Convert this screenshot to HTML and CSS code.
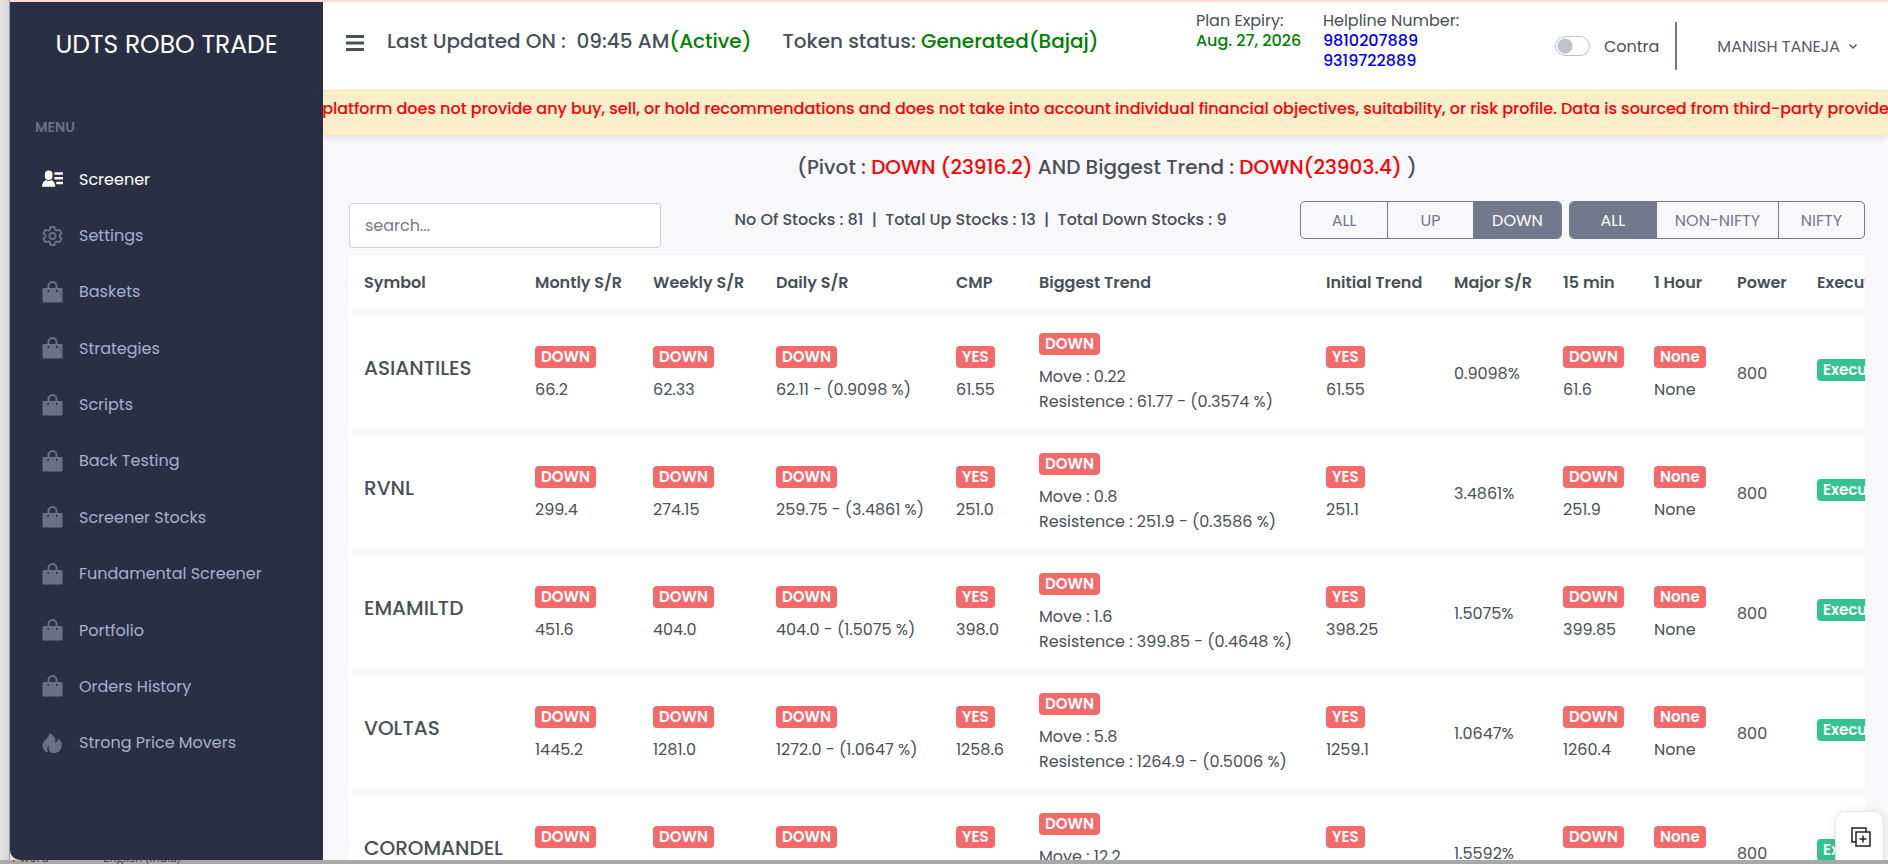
FILE: index.html
```html
<!DOCTYPE html>
<html lang="en">
<head>
    <meta charset="UTF-8">
    <meta name="viewport" content="width=device-width, initial-scale=1.0">
    <title>UDTS Robo Trade</title>
    <link rel="stylesheet" href="styles.css">
</head>
<body>
    <svg class="sprite" aria-hidden="true">
        <symbol id="bag" viewBox="0 0 20 22">
            <path fill-rule="evenodd" d="M5 7V5a5 5 0 0 1 10 0v2h4a1 1 0 0 1 1 1v12.500a1 1 0 0 1-1 1h-18a1 1 0 0 1-1-1v-12.500a1 1 0 0 1 1-1zM7 7h6V5a3 3 0 0 0-6 0zM5 9h1.500v2H5zM13.500 9H15v2h-1.500z"/>
        </symbol>
    </svg>

    <div class="window">
        <aside class="sidebar">
            <h1 class="brand">UDTS ROBO TRADE</h1>
            <p class="menu-title">MENU</p>
            <ul class="menu">
                <li><a class="active" href="#">
                    <svg viewBox="0 0 22 20"><path d="M7 1a4 4 0 0 1 4 4v2a4 4 0 0 1-8 0V5a4 4 0 0 1 4-4zM0 18c0-4 2-6 4-7 2 1.500 4 1.500 6 0 2 1 4 3 4 7zM13 3h9v2.500h-9zM13 8h9v2.500h-9zM15 13h7v2.500h-7z"/></svg>
                    Screener</a></li>
                <li><a href="#">
                    <svg class="line" viewBox="0 0 22 22"><circle cx="11" cy="11" r="3.200"/><path d="M9 1.500h4l.8 2.900 1.800 1 2.900-.8 2 3.500-2.100 2.100v1.600l2.100 2.100-2 3.500-2.900-.8-1.800 1-.8 2.900H9l-.8-2.900-1.800-1-2.900.8-2-3.500 2.100-2.100v-1.600L1.500 8.100l2-3.500 2.900.8 1.800-1z"/></svg>
                    Settings</a></li>
                <li><a href="#"><svg><use href="#bag"/></svg>Baskets</a></li>
                <li><a href="#"><svg><use href="#bag"/></svg>Strategies</a></li>
                <li><a href="#"><svg><use href="#bag"/></svg>Scripts</a></li>
                <li><a href="#"><svg><use href="#bag"/></svg>Back Testing</a></li>
                <li><a href="#"><svg><use href="#bag"/></svg>Screener Stocks</a></li>
                <li><a href="#"><svg><use href="#bag"/></svg>Fundamental Screener</a></li>
                <li><a href="#"><svg><use href="#bag"/></svg>Portfolio</a></li>
                <li><a href="#"><svg><use href="#bag"/></svg>Orders History</a></li>
                <li><a href="#">
                    <svg viewBox="0 0 20 22"><path d="M7 1c5 2.500 7 6 5.500 10 1.800-.7 2.700-2 3-4.500C19 9 20 12 19 15c-.8 3.500-3 5.500-6 6H9c-3-2-3-5-2.500-7.500C4 15 4.500 18 6 20.500 2.500 20 0 17 0 13.500 0 8 6 7.500 7 1z"/></svg>
                    Strong Price Movers</a></li>
            </ul>
        </aside>

        <main class="main">
            <header class="topbar">
                <button class="menu-toggle" aria-label="Toggle menu">
                    <svg viewBox="0 0 18 16"><path d="M0 1.500h18M0 8h18M0 14.500h18"/></svg>
                </button>
                <div class="status">Last Updated ON :&nbsp; 09:45 AM<span class="green">(Active)</span></div>
                <div class="status">Token status: <span class="green">Generated(Bajaj)</span></div>
                <div class="info plan">Plan Expiry:<br><strong class="green">Aug. 27, 2026</strong></div>
                <div class="info helpline">Helpline Number:<br>
                    <a href="tel:9810207889">9810207889</a><br>
                    <a href="tel:9319722889">9319722889</a>
                </div>
                <label class="contra"><input type="checkbox"> Contra</label>
                <button class="user">MANISH TANEJA
                    <svg viewBox="0 0 10 10"><path d="M1.500 3.500 5 7l3.500-3.500"/></svg>
                </button>
            </header>

            <div class="notice">
                <span>platform does not provide any buy, sell, or hold recommendations and does not take into account individual financial objectives, suitability, or risk profile. Data is sourced from third-party provide</span>
            </div>

            <section class="content">
                <h2 class="trend">(Pivot : <span>DOWN (23916.2)</span> AND Biggest Trend : <span>DOWN(23903.4)</span> )</h2>

                <div class="toolbar">
                    <input class="search" type="text" placeholder="search..." aria-label="Search">
                    <div class="counts">No Of Stocks : 81 &nbsp;|&nbsp; Total Up Stocks : 13 &nbsp;|&nbsp; Total Down Stocks : 9</div>
                    <div class="filters">
                        <div class="btn-group">
                            <button>ALL</button>
                            <button>UP</button>
                            <button class="active">DOWN</button>
                        </div>
                        <div class="btn-group">
                            <button class="active">ALL</button>
                            <button>NON-NIFTY</button>
                            <button>NIFTY</button>
                        </div>
                    </div>
                </div>

                <div class="table-wrap">
                    <table class="stocks">
                        <colgroup>
                            <col class="c-symbol"><col class="c-monthly"><col class="c-weekly"><col class="c-daily">
                            <col class="c-cmp"><col class="c-biggest"><col class="c-initial"><col class="c-major">
                            <col class="c-min"><col class="c-hour"><col class="c-power"><col class="c-exec">
                        </colgroup>
                        <thead>
                            <tr>
                                <th>Symbol</th><th>Montly S/R</th><th>Weekly S/R</th><th>Daily S/R</th>
                                <th>CMP</th><th>Biggest Trend</th><th>Initial Trend</th><th>Major S/R</th>
                                <th>15 min</th><th>1 Hour</th><th>Power</th><th>Execute</th>
                            </tr>
                        </thead>
                        <tbody>
                            <tr>
                                <td class="symbol">ASIANTILES</td>
                                <td><p><span class="badge">DOWN</span></p>66.2</td>
                                <td><p><span class="badge">DOWN</span></p>62.33</td>
                                <td><p><span class="badge">DOWN</span></p>62.11 - (0.9098 %)</td>
                                <td><p><span class="badge">YES</span></p>61.55</td>
                                <td><p><span class="badge">DOWN</span></p>Move : 0.22<br>Resistence : 61.77 - (0.3574 %)</td>
                                <td><p><span class="badge">YES</span></p>61.55</td>
                                <td>0.9098%</td>
                                <td><p><span class="badge">DOWN</span></p>61.6</td>
                                <td><p><span class="badge">None</span></p>None</td>
                                <td>800</td>
                                <td class="exec"><button class="badge success">Execute</button></td>
                            </tr>
                            <tr>
                                <td class="symbol">RVNL</td>
                                <td><p><span class="badge">DOWN</span></p>299.4</td>
                                <td><p><span class="badge">DOWN</span></p>274.15</td>
                                <td><p><span class="badge">DOWN</span></p>259.75 - (3.4861 %)</td>
                                <td><p><span class="badge">YES</span></p>251.0</td>
                                <td><p><span class="badge">DOWN</span></p>Move : 0.8<br>Resistence : 251.9 - (0.3586 %)</td>
                                <td><p><span class="badge">YES</span></p>251.1</td>
                                <td>3.4861%</td>
                                <td><p><span class="badge">DOWN</span></p>251.9</td>
                                <td><p><span class="badge">None</span></p>None</td>
                                <td>800</td>
                                <td class="exec"><button class="badge success">Execute</button></td>
                            </tr>
                            <tr>
                                <td class="symbol">EMAMILTD</td>
                                <td><p><span class="badge">DOWN</span></p>451.6</td>
                                <td><p><span class="badge">DOWN</span></p>404.0</td>
                                <td><p><span class="badge">DOWN</span></p>404.0 - (1.5075 %)</td>
                                <td><p><span class="badge">YES</span></p>398.0</td>
                                <td><p><span class="badge">DOWN</span></p>Move : 1.6<br>Resistence : 399.85 - (0.4648 %)</td>
                                <td><p><span class="badge">YES</span></p>398.25</td>
                                <td>1.5075%</td>
                                <td><p><span class="badge">DOWN</span></p>399.85</td>
                                <td><p><span class="badge">None</span></p>None</td>
                                <td>800</td>
                                <td class="exec"><button class="badge success">Execute</button></td>
                            </tr>
                            <tr>
                                <td class="symbol">VOLTAS</td>
                                <td><p><span class="badge">DOWN</span></p>1445.2</td>
                                <td><p><span class="badge">DOWN</span></p>1281.0</td>
                                <td><p><span class="badge">DOWN</span></p>1272.0 - (1.0647 %)</td>
                                <td><p><span class="badge">YES</span></p>1258.6</td>
                                <td><p><span class="badge">DOWN</span></p>Move : 5.8<br>Resistence : 1264.9 - (0.5006 %)</td>
                                <td><p><span class="badge">YES</span></p>1259.1</td>
                                <td>1.0647%</td>
                                <td><p><span class="badge">DOWN</span></p>1260.4</td>
                                <td><p><span class="badge">None</span></p>None</td>
                                <td>800</td>
                                <td class="exec"><button class="badge success">Execute</button></td>
                            </tr>
                            <tr>
                                <td class="symbol">COROMANDEL</td>
                                <td><p><span class="badge">DOWN</span></p>&nbsp;</td>
                                <td><p><span class="badge">DOWN</span></p>&nbsp;</td>
                                <td><p><span class="badge">DOWN</span></p>&nbsp;</td>
                                <td><p><span class="badge">YES</span></p>&nbsp;</td>
                                <td><p><span class="badge">DOWN</span></p>Move : 12.2<br>&nbsp;</td>
                                <td><p><span class="badge">YES</span></p>&nbsp;</td>
                                <td>1.5592%</td>
                                <td><p><span class="badge">DOWN</span></p>&nbsp;</td>
                                <td><p><span class="badge">None</span></p>&nbsp;</td>
                                <td>800</td>
                                <td class="exec"><button class="badge success">Execute</button></td>
                            </tr>
                        </tbody>
                    </table>
                </div>
            </section>
        </main>

        <button class="copy-btn" aria-label="Add copy">
            <svg viewBox="0 0 20 20"><path d="M5 15H1V1h14v4M5 5h14v14H5zM12 8.500v7M8.500 12h7"/></svg>
        </button>
    </div>

    <footer class="statusbar">
        <span>1 word</span>
        <span>English (India)</span>
    </footer>
</body>
</html>
```
FILE: styles.css
```css
* {
    box-sizing: border-box;
}

body {
    display: flex;
    flex-direction: column;
    margin: 0;
    padding: 2px 0 0 10px;
    height: 100vh;
    overflow: hidden;
    background: linear-gradient(#a9a9a9, #a9a9a9) bottom / 100% 4px no-repeat,
        linear-gradient(90deg, #e4e4e4, #d6d6d6 9px, #999 9px, #999 10px, #f9ddd2 10px);
    font-family: Poppins, Inter, "Open Sans", sans-serif;
    font-size: 16px;
    color: #495057;
}

button,
input {
    font: inherit;
    color: inherit;
}

a {
    text-decoration: none;
}

.sprite {
    position: absolute;
    width: 0;
    height: 0;
}

.window {
    position: relative;
    display: flex;
    flex: 1;
    min-height: 0;
    overflow: hidden;
    border-radius: 0 0 0 10px;
}

/* sidebar */
.sidebar {
    width: 313px;
    flex-shrink: 0;
    background: #2b2f43;
}

.brand {
    margin: 0;
    padding: 25px 0 24px;
    font-size: 25px;
    font-weight: 400;
    line-height: 36px;
    text-align: center;
    color: #fff;
}

.menu-title {
    margin: 0;
    padding: 30px 25px 14px;
    font-size: 14px;
    font-weight: 600;
    line-height: 20px;
    color: #6a7187;
}

.menu {
    display: grid;
    grid-auto-rows: 1fr;
    height: 620px;
    margin: 0;
    padding: 0;
    list-style: none;
}

.menu a {
    display: flex;
    align-items: center;
    height: 100%;
    gap: 16px;
    padding-left: 32px;
    font-size: 16px;
    color: #a6b0cf;
}

.menu svg {
    width: 21px;
    height: 22px;
    fill: #6a7187;
}

.menu svg.line {
    fill: none;
    stroke: #6a7187;
    stroke-width: 2;
    stroke-linejoin: round;
}

.menu a.active {
    color: #fff;
}

.menu a.active svg {
    fill: #fff;
}

/* top bar */
.main {
    display: flex;
    flex: 1;
    flex-direction: column;
    min-width: 0;
    background: #f8f8fb;
}

.topbar {
    display: flex;
    align-items: flex-start;
    height: 88px;
    flex-shrink: 0;
    padding: 9px 30px 0 23px;
    background: #fff;
    white-space: nowrap;
}

.menu-toggle {
    margin-right: 23px;
    padding: 24px 0 0;
    border: 0;
    background: none;
}

.menu-toggle svg {
    display: block;
    width: 18px;
    height: 16px;
    stroke: #495057;
    stroke-width: 3;
}

.status {
    margin-right: 31px;
    font-size: 20px;
    font-weight: 500;
    line-height: 60px;
}

.green {
    color: green;
}

.info {
    font-size: 16px;
    line-height: 20px;
}

.info strong,
.info a {
    font-weight: 500;
}

.plan {
    margin-left: auto;
    width: 127px;
}

.helpline {
    width: 232px;
}

.helpline a {
    color: #00f;
}

.contra {
    display: flex;
    align-items: center;
    gap: 14px;
    height: 48px;
    margin-top: 11px;
    padding-right: 16px;
    border-right: 2px solid #74788d;
    font-size: 16px;
}

.contra input {
    width: 35px;
    height: 20px;
    margin: 0;
    border: 1px solid #bfc3c9;
    border-radius: 10px;
    background: radial-gradient(circle at 9px 9px, #bfc3c9 7px, transparent 8px);
    appearance: none;
}

.user {
    display: flex;
    align-items: center;
    gap: 8px;
    height: 48px;
    margin: 11px 0 0 40px;
    padding: 0;
    border: 0;
    background: none;
    font-size: 16px;
    color: #555b6d;
}

.user svg {
    width: 10px;
    height: 10px;
    fill: none;
    stroke: #555b6d;
    stroke-width: 1.500;
}

.notice {
    display: flex;
    justify-content: center;
    height: 46px;
    flex-shrink: 0;
    overflow: hidden;
    border: 1px solid #f8e5b5;
    border-width: 1px 0;
    border-radius: 0 4px 4px 0;
    background: #fdeecb;
    font-size: 16px;
    font-weight: 500;
    line-height: 36px;
    white-space: nowrap;
    color: #f00;
    box-shadow: 0 2px 6px rgba(18, 38, 63, 0.12);
}

/* content */
.content {
    padding: 16px 23px 0 26px;
}

.trend {
    margin: 0 0 19px;
    font-size: 20px;
    font-weight: 500;
    line-height: 30px;
    text-align: center;
}

.trend span {
    color: #f00;
}

.toolbar {
    display: flex;
    align-items: flex-start;
    justify-content: space-between;
    height: 54px;
}

.search {
    width: 312px;
    height: 45px;
    margin-top: 2px;
    padding: 0 15px;
    border: 1px solid #ced4da;
    border-radius: 4px;
    background: #fff;
    font-size: 16px;
}

.search::placeholder {
    color: #74788d;
}

.counts {
    font-size: 16px;
    font-weight: 500;
    line-height: 38px;
}

.filters {
    display: flex;
    gap: 7px;
}

.btn-group {
    display: flex;
    border: 1px solid #74788d;
    border-radius: 5px;
    overflow: hidden;
}

.btn-group button {
    min-width: 86px;
    height: 36px;
    padding: 0 18px;
    border: 0;
    background: none;
    font-size: 16px;
    color: #74788d;
}

.btn-group button + button {
    border-left: 1px solid #74788d;
}

.btn-group .active {
    background: #74788d;
    color: #fff;
}

/* stocks table */
.table-wrap {
    overflow: hidden;
}

.stocks {
    width: 1583px;
    table-layout: fixed;
    border-collapse: collapse;
    white-space: nowrap;
}

.c-symbol { width: 171px; }
.c-monthly { width: 118px; }
.c-weekly { width: 123px; }
.c-daily { width: 180px; }
.c-cmp { width: 83px; }
.c-biggest { width: 287px; }
.c-initial { width: 128px; }
.c-major { width: 109px; }
.c-min { width: 91px; }
.c-hour { width: 83px; }
.c-power { width: 80px; }

.stocks tr {
    background: #fff;
    border-bottom: 6px solid #f8f8fb;
}

.stocks th {
    height: 57px;
    padding: 0 15px;
    font-size: 16px;
    font-weight: 600;
    text-align: left;
}

.stocks td {
    height: 120px;
    padding: 2px 15px 0;
    font-size: 16px;
    line-height: 25px;
}

.stocks p {
    display: flex;
    align-items: center;
    height: 24px;
    margin: 0 0 8px;
}

.stocks .symbol {
    padding-bottom: 10px;
    font-size: 20px;
    font-weight: 500;
}

.stocks .exec {
    padding-bottom: 8px;
}

.badge {
    padding: 0 6px;
    border: 0;
    border-radius: 4px;
    background: #f46a6a;
    font-size: 15px;
    font-weight: 600;
    line-height: 22px;
    color: #fff;
}

.badge.success {
    background: #34c38f;
}

/* floating button over the table */
.copy-btn {
    position: absolute;
    right: 4px;
    bottom: 0;
    width: 49px;
    height: 49px;
    padding: 2px 0 0 15px;
    border: 1px solid #e6e8ee;
    border-bottom: 0;
    border-radius: 10px 10px 0 0;
    background: #fff;
    box-shadow: 0 0 8px rgba(18, 38, 63, 0.1);
}

.copy-btn svg {
    display: block;
    width: 20px;
    height: 20px;
    fill: none;
    stroke: #222;
    stroke-width: 1.500;
}

/* sliver of the bar under the window */
.statusbar {
    display: flex;
    align-items: flex-end;
    gap: 54px;
    height: 4px;
    flex-shrink: 0;
    overflow: hidden;
    font-family: "Open Sans", sans-serif;
    font-size: 12px;
    line-height: 12px;
    color: #444;
}
```
